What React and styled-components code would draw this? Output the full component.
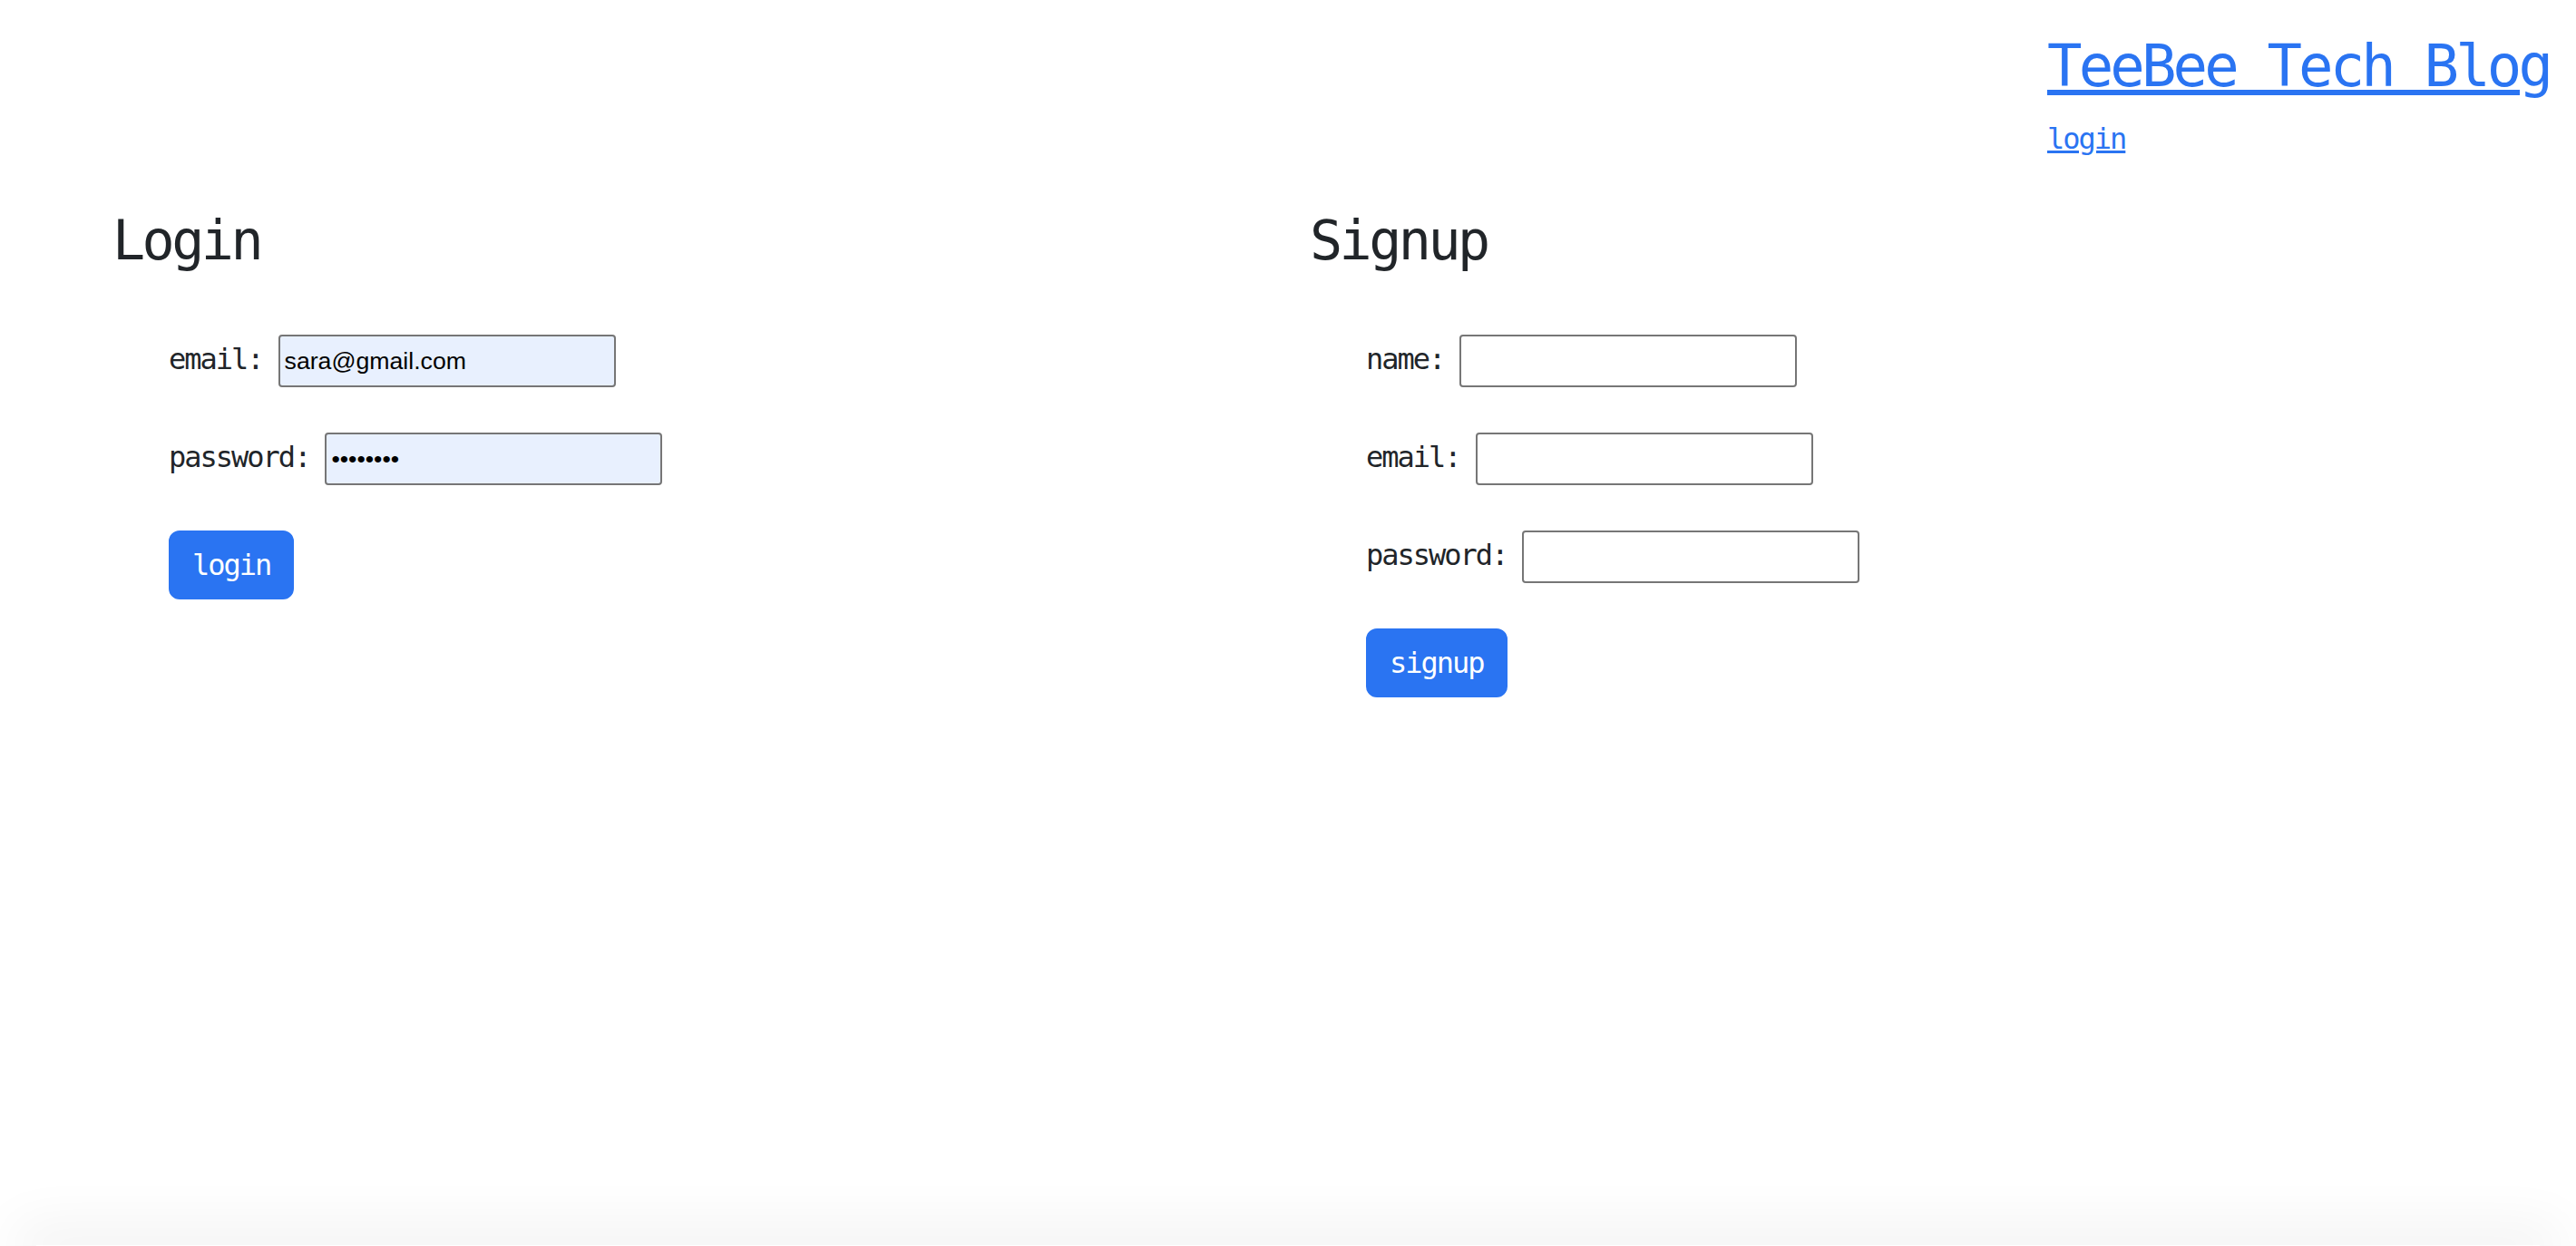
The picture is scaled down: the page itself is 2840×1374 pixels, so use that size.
import React from "react";
import styled, { createGlobalStyle } from "styled-components";

const BLUE = "#2a74f2";
const INK = "#212529";

const GlobalStyle = createGlobalStyle`
  html, body {
    margin: 0;
    padding: 0;
    background: #fff;
  }
  body {
    font-family: "DejaVu Sans Mono", "Liberation Mono", monospace;
    color: ${INK};
  }
  * { box-sizing: border-box; }
`;

function Field({ label, type = "text", value, filled }) {
  return (
    <Row>
      <Label>{label}:</Label>
      <Input type={type} defaultValue={value} filled={filled ? 1 : 0} />
    </Row>
  );
}

export default function App() {
  return (
    <Page>
      <GlobalStyle />
      <Header>
        <Brand>
          <Title href="#">TeeBee Tech Blog</Title>
          <NavLink href="#">login</NavLink>
        </Brand>
      </Header>
      <Main>
        <Column>
          <Heading>Login</Heading>
          <Form>
            <Field label="email" value="sara@gmail.com" filled />
            <Field label="password" type="password" value="password" filled />
            <Button type="button">login</Button>
          </Form>
        </Column>
        <Column>
          <Heading>Signup</Heading>
          <Form>
            <Field label="name" />
            <Field label="email" />
            <Field label="password" type="password" />
            <Button type="button">signup</Button>
          </Form>
        </Column>
      </Main>
      <Footer />
    </Page>
  );
}

const Page = styled.div`
  min-height: 100vh;
  display: flex;
  flex-direction: column;
  overflow: hidden;
`;

const Header = styled.header`
  display: flex;
  justify-content: flex-end;
  padding: 35px 27px 0 0;
`;

const Brand = styled.div`
  width: 556px;
  display: flex;
  flex-direction: column;
  gap: 22px;
`;

const Title = styled.a`
  font-size: 64px;
  line-height: 1.2;
  letter-spacing: -3.9px;
  color: ${BLUE};
  white-space: nowrap;
  text-decoration: underline;
  text-decoration-thickness: 6px;
  text-underline-offset: 4px;
`;

const NavLink = styled.a`
  align-self: flex-start;
  font-size: 32px;
  line-height: 1.2;
  letter-spacing: -2px;
  color: ${BLUE};
  text-decoration: underline;
  text-decoration-thickness: 3px;
  text-underline-offset: 2px;
`;

const Main = styled.main`
  display: grid;
  grid-template-columns: 1320px 1320px;
  padding-left: 124px;
  margin-top: 57px;
`;

const Column = styled.section`
  display: flex;
  flex-direction: column;
`;

const Heading = styled.h2`
  margin: 0 0 68px;
  font-size: 60px;
  line-height: 1.2;
  letter-spacing: -3.5px;
  font-weight: 400;
  color: ${INK};
`;

const Form = styled.form`
  display: flex;
  flex-direction: column;
  align-items: flex-start;
  gap: 50px;
  padding-left: 62px;
`;

const Row = styled.div`
  display: flex;
  align-items: baseline;
`;

const Label = styled.label`
  font-size: 32px;
  line-height: 1.5;
  letter-spacing: -2px;
  color: ${INK};
  margin-right: 17px;
`;

const Input = styled.input`
  width: 372px;
  height: 58px;
  padding: 0 5px;
  border: 2px solid #767676;
  border-radius: 4px;
  background: ${(p) => (p.filled ? "#e8f0fe" : "#fff")};
  color: #000;
  font-family: "Liberation Sans", Arial, sans-serif;
  font-size: 26.67px;
  outline: none;
`;

const Button = styled.button`
  padding: 12px 24px;
  border: 2px solid ${BLUE};
  border-radius: 12px;
  background: ${BLUE};
  color: #fff;
  font-family: "DejaVu Sans Mono", monospace;
  font-size: 32px;
  line-height: 48px;
  letter-spacing: -2px;
  cursor: pointer;
`;

const Footer = styled.footer`
  margin: auto 40px 0;
  height: 1px;
  border-radius: 40px;
  box-shadow: 0 0 60px 22px rgba(0, 0, 0, 0.06);
`;
